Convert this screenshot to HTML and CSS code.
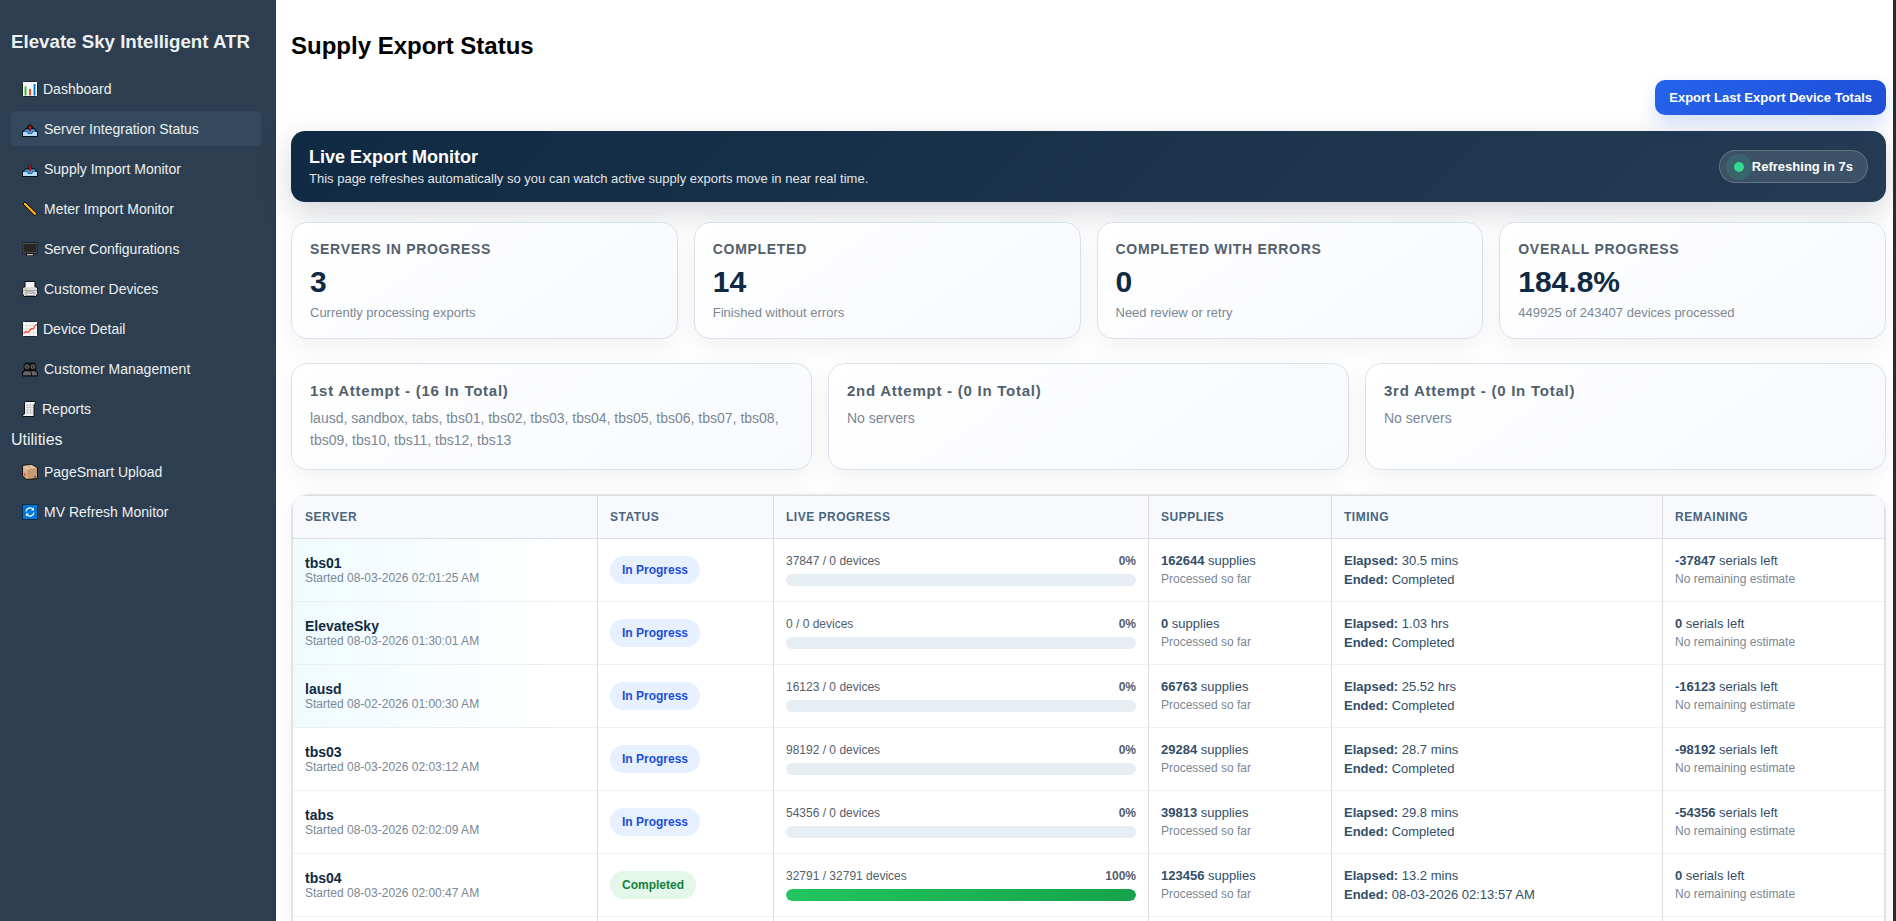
FILE: index.html
```html
<!DOCTYPE html>
<html lang="en">
<head>
<meta charset="utf-8">
<title>Supply Export Status</title>
<link rel="stylesheet" href="styles.css">
</head>
<body>
<div class="app">
<aside class="sidebar">
  <h3 class="brand">Elevate Sky Intelligent ATR</h3>
  <nav class="nav">
    <a class="nav-item"><svg class="ico ico-mid" viewBox="0 0 16 16"><rect x=".5" y=".5" width="15" height="15" rx="1" fill="#f5f5f5" stroke="#1b232c"/><path d="M3.500 5.500v9" stroke="#16c60c" stroke-width="1.800"/><path d="M8 8v6.500" stroke="#f03a17" stroke-width="1.800"/><path d="M12.500 3v11.500" stroke="#0078d7" stroke-width="1.800"/></svg>Dashboard</a>
    <a class="nav-item active"><svg class="ico" viewBox="0 0 16 16"><path d="M.5 10.500L3.500 7.500h9l3 3v5H.5z" fill="#1c3850" stroke="#0c1116"/><path d="M4 8.500h8l2 2h-3.500l-1 2h-3l-1-2H2z" fill="#4a9be0"/><path d="M1 11h4l1.200 2h3.600l1.200-2h4v4H1z" fill="#b3dcf7"/><path d="M8 10V5M5 7l3-3 3 3" stroke="#161616" stroke-width="1.800" fill="none"/><path d="M8 10.500V5" stroke="#e81123" stroke-width="1.300"/><path d="M6.500 6.500L8 4.500l1.500 2z" fill="#e81123"/></svg>Server Integration Status</a>
    <a class="nav-item"><svg class="ico" viewBox="0 0 16 16"><path d="M.5 10.500L3.500 7.500h9l3 3v5H.5z" fill="#1c3850" stroke="#0c1116"/><path d="M4 8.500h8l2 2h-3.500l-1 2h-3l-1-2H2z" fill="#4a9be0"/><path d="M1 11h4l1.200 2h3.600l1.200-2h4v4H1z" fill="#b3dcf7"/><path d="M8 9V3.500" stroke="#161616" stroke-width="2.800"/><path d="M8 9.500V4" stroke="#e81123" stroke-width="1.300"/><path d="M6.300 8.500L8 10.700l1.700-2.200z" fill="#e81123"/></svg>Supply Import Monitor</a>
    <a class="nav-item"><svg class="ico" viewBox="0 0 16 16"><path d="M1 3L3 1 15 12.700 13 14.800z" fill="#ffb900" stroke="#111" stroke-width="1"/></svg>Meter Import Monitor</a>
    <a class="nav-item"><svg class="ico" viewBox="0 0 16 16"><path d="M0 1.500h16v11H12v2.500H4v-2.500H0z" fill="#0c0c0c"/><rect x="1" y="2.500" width="14" height="9" fill="#262626" stroke="#5c5c5c" stroke-width=".8"/><path d="M5 13.700h6" stroke="#e5e5e5" stroke-width="1.200"/></svg>Server Configurations</a>
    <a class="nav-item"><svg class="ico" viewBox="0 0 16 16"><path d="M3 .5h10V6h2l.6 1v5.500L14 15.500H2L.4 12.500V7L1 6h2z" fill="#dcdcdc" stroke="#111"/><path d="M4 1h8v5H4z" fill="#f7f7f7"/><path d="M1 9.500h14" stroke="#a8a8a8"/><path d="M4 11h8v3.500H4z" fill="#f8f8f8" stroke="#777" stroke-width=".7"/><path d="M5 12.500h6" stroke="#999" stroke-width=".7"/><path d="M3 8h2" stroke="#b4c916"/></svg>Customer Devices</a>
    <a class="nav-item"><svg class="ico ico-mid" viewBox="0 0 16 16"><rect x=".5" y=".5" width="15" height="15" rx="1" fill="#f7f7f7" stroke="#1b232c"/><path d="M1 4.500h14M1 8h14M1 11.500h14M4.500 1v14M8 1v14M11.500 1v14" stroke="#d8d8d8" stroke-width=".7"/><path d="M1.500 12.500l2.500-2 2 1 3.500-4 1.500.5L14.500 3" stroke="#f0452a" stroke-width="1.300" fill="none"/></svg>Device Detail</a>
    <a class="nav-item"><svg class="ico" viewBox="0 0 16 16"><path d="M.5 15v-3.500l2-2.500L2 5l1.500-3h4L8 3l1-1h3.500L14 5l-.5 4 2 2.500V15z" fill="#0e0e0e" stroke="#0b0b0b"/><circle cx="5" cy="5.500" r="2.600" fill="#444"/><circle cx="11" cy="5.500" r="2.600" fill="#444"/><circle cx="5" cy="6" r="1.400" stroke="#777" stroke-width=".7" fill="#222"/><circle cx="10.500" cy="6" r="1.400" stroke="#777" stroke-width=".7" fill="#222"/><path d="M1 14.200v-2l2-2h4.500l1.500 2v2zM10 14.200v-2l-1.500-2H13l2 2v2z" fill="#686868"/></svg>Customer Management</a>
    <a class="nav-item"><svg class="ico ico-narrow" viewBox="0 0 14 16"><path d="M2.500 1L4 .5h9l.5 2-1.500 1V15.500H1L.5 13.500l2-.5z" fill="#f2f2f2" stroke="#111"/><path d="M4 4h7M4 6.500h7M4 9h7M4 11.500h7M5.500 3.500v10M8.500 3.500v10" stroke="#b5b5b5" stroke-width=".6"/></svg>Reports</a>
    <div class="nav-heading">Utilities</div>
    <a class="nav-item"><svg class="ico" viewBox="0 0 16 16"><path d="M.5 1.500L9.500.5l6 3.500v10.500l-10.500 1L.5 12z" fill="#c69a6d" stroke="#15100c"/><path d="M1 2l4 3.500V15L1 11.800z" fill="#dbb48e"/><path d="M1 2l8.500-1L15 4 5 5.500z" fill="#e6c6a5"/><path d="M5.500 2l4 2.500" stroke="#c09870"/><path d="M2 9l1.500 3" stroke="#e8384f" stroke-width="1.400"/><path d="M12 13l2-.3" stroke="#4d3520" stroke-width="1.200"/></svg>PageSmart Upload</a>
    <a class="nav-item"><svg class="ico" viewBox="0 0 16 16"><rect x=".5" y=".5" width="15" height="15" fill="#0078d7" stroke="#0b2b4a"/><path d="M4 7.500A4 4 0 0 1 11 5.300M12 8.500A4 4 0 0 1 5 10.700" stroke="#fff" stroke-width="1.200" fill="none"/><path d="M12 3.500V6.500H9zM4 12.500V9.500h3z" fill="#fff"/></svg>MV Refresh Monitor</a>
  </nav>
</aside>
<main class="main">
  <h1 class="page-title">Supply Export Status</h1>
  <div class="actions"><button class="export-btn">Export Last Export Device Totals</button></div>
  <section class="banner">
    <div>
      <div class="banner-title">Live Export Monitor</div>
      <div class="banner-sub">This page refreshes automatically so you can watch active supply exports move in near real time.</div>
    </div>
    <div class="refresh"><span class="dot"></span>Refreshing in 7s</div>
  </section>
  <section class="stats">
    <div class="card"><div class="label">SERVERS IN PROGRESS</div><div class="value">3</div><div class="note">Currently processing exports</div></div>
    <div class="card"><div class="label">COMPLETED</div><div class="value">14</div><div class="note">Finished without errors</div></div>
    <div class="card"><div class="label">COMPLETED WITH ERRORS</div><div class="value">0</div><div class="note">Need review or retry</div></div>
    <div class="card"><div class="label">OVERALL PROGRESS</div><div class="value">184.8%</div><div class="note">449925 of 243407 devices processed</div></div>
  </section>
  <section class="attempts">
    <div class="card"><div class="attempt-title">1st Attempt - (16 In Total)</div><div class="servers">lausd, sandbox, tabs, tbs01, tbs02, tbs03, tbs04, tbs05, tbs06, tbs07, tbs08, tbs09, tbs10, tbs11, tbs12, tbs13</div></div>
    <div class="card"><div class="attempt-title">2nd Attempt - (0 In Total)</div><div class="servers">No servers</div></div>
    <div class="card"><div class="attempt-title">3rd Attempt - (0 In Total)</div><div class="servers">No servers</div></div>
  </section>
  <section class="table-wrap">
    <table class="grid">
      <colgroup><col class="c1"><col class="c2"><col class="c3"><col class="c4"><col class="c5"><col class="c6"></colgroup>
      <thead><tr><th>SERVER</th><th>STATUS</th><th>LIVE PROGRESS</th><th>SUPPLIES</th><th>TIMING</th><th>REMAINING</th></tr></thead>
      <tbody>
        <tr class="live"><td><div class="name">tbs01</div><div class="started">Started 08-03-2026 02:01:25 AM</div></td><td><span class="pill">In Progress</span></td><td><div class="prog"><span>37847 / 0 devices</span><b>0%</b></div><div class="bar"></div></td><td><div class="line"><b>162644</b> supplies</div><div class="sub">Processed so far</div></td><td class="timing"><div class="line"><b>Elapsed:</b> 30.5 mins</div><div class="line"><b>Ended:</b> Completed</div></td><td><div class="line"><b>-37847</b> serials left</div><div class="sub">No remaining estimate</div></td></tr>
        <tr class="live"><td><div class="name">ElevateSky</div><div class="started">Started 08-03-2026 01:30:01 AM</div></td><td><span class="pill">In Progress</span></td><td><div class="prog"><span>0 / 0 devices</span><b>0%</b></div><div class="bar"></div></td><td><div class="line"><b>0</b> supplies</div><div class="sub">Processed so far</div></td><td class="timing"><div class="line"><b>Elapsed:</b> 1.03 hrs</div><div class="line"><b>Ended:</b> Completed</div></td><td><div class="line"><b>0</b> serials left</div><div class="sub">No remaining estimate</div></td></tr>
        <tr class="live"><td><div class="name">lausd</div><div class="started">Started 08-02-2026 01:00:30 AM</div></td><td><span class="pill">In Progress</span></td><td><div class="prog"><span>16123 / 0 devices</span><b>0%</b></div><div class="bar"></div></td><td><div class="line"><b>66763</b> supplies</div><div class="sub">Processed so far</div></td><td class="timing"><div class="line"><b>Elapsed:</b> 25.52 hrs</div><div class="line"><b>Ended:</b> Completed</div></td><td><div class="line"><b>-16123</b> serials left</div><div class="sub">No remaining estimate</div></td></tr>
        <tr><td><div class="name">tbs03</div><div class="started">Started 08-03-2026 02:03:12 AM</div></td><td><span class="pill">In Progress</span></td><td><div class="prog"><span>98192 / 0 devices</span><b>0%</b></div><div class="bar"></div></td><td><div class="line"><b>29284</b> supplies</div><div class="sub">Processed so far</div></td><td class="timing"><div class="line"><b>Elapsed:</b> 28.7 mins</div><div class="line"><b>Ended:</b> Completed</div></td><td><div class="line"><b>-98192</b> serials left</div><div class="sub">No remaining estimate</div></td></tr>
        <tr><td><div class="name">tabs</div><div class="started">Started 08-03-2026 02:02:09 AM</div></td><td><span class="pill">In Progress</span></td><td><div class="prog"><span>54356 / 0 devices</span><b>0%</b></div><div class="bar"></div></td><td><div class="line"><b>39813</b> supplies</div><div class="sub">Processed so far</div></td><td class="timing"><div class="line"><b>Elapsed:</b> 29.8 mins</div><div class="line"><b>Ended:</b> Completed</div></td><td><div class="line"><b>-54356</b> serials left</div><div class="sub">No remaining estimate</div></td></tr>
        <tr><td><div class="name">tbs04</div><div class="started">Started 08-03-2026 02:00:47 AM</div></td><td><span class="pill done">Completed</span></td><td><div class="prog"><span>32791 / 32791 devices</span><b>100%</b></div><div class="bar"><div class="fill" style="width:100%"></div></div></td><td><div class="line"><b>123456</b> supplies</div><div class="sub">Processed so far</div></td><td class="timing"><div class="line"><b>Elapsed:</b> 13.2 mins</div><div class="line"><b>Ended:</b> 08-03-2026 02:13:57 AM</div></td><td><div class="line"><b>0</b> serials left</div><div class="sub">No remaining estimate</div></td></tr>
        <tr><td></td><td></td><td></td><td></td><td></td><td></td></tr>
      </tbody>
    </table>
  </section>
</main>
</div>
</body>
</html>
```
FILE: styles.css
```css
* { box-sizing: border-box; }
body { margin: 0; background: #fff; font-family: Arial, "Liberation Sans", sans-serif; overflow: hidden; }
.app { display: flex; height: 921px; overflow: hidden; border-right: 3px solid #2b2b2b; }

.sidebar { width: 276px; flex: none; padding: 31px 15px 0 11px; background: #2c3e50; color: #ecf0f1; }
.brand { margin: 0 0 19px; font-size: 18.72px; line-height: 21px; white-space: nowrap; }
.nav { display: flex; flex-direction: column; gap: 5px; }
.nav-item { display: flex; align-items: center; height: 35px; padding-left: 11px; border-radius: 5px; font-size: 14px; line-height: 16px; white-space: nowrap; }
.nav-item.active { background: #34495e; }
.nav-heading { height: 18px; font-size: 16px; line-height: 18px; }
.ico { flex: none; width: 16px; height: 16px; margin-top: 1px; margin-right: 6px; }
.ico-mid { margin-right: 5px; }
.ico-narrow { width: 14px; }

.main { flex: 1; min-width: 0; padding: 32px 7px 0 15px; }
.page-title { margin: 0 0 21px; font-size: 24px; line-height: 27px; color: #000; }
.actions { display: flex; justify-content: flex-end; margin-bottom: 16px; }
.export-btn { height: 35px; padding: 0 14px; border: 0; border-radius: 10px; background: linear-gradient(135deg, #2563eb, #1d4ed8); box-shadow: 0 8px 18px rgba(37, 99, 235, .2); color: #fff; font: bold 13px Arial, "Liberation Sans", sans-serif; }

.banner { display: flex; align-items: center; justify-content: space-between; height: 71px; margin-bottom: 20px; padding: 0 18px; border-radius: 14px; background: linear-gradient(135deg, #102a43, #243b53); box-shadow: 0 10px 30px rgba(15, 23, 42, .18); color: #fff; }
.banner-title { margin-bottom: 4px; font-size: 18px; font-weight: bold; line-height: 20px; }
.banner-sub { font-size: 13px; line-height: 15px; opacity: .88; }
.refresh { display: flex; align-items: center; gap: 8px; height: 33px; padding: 0 14px; border: 1px solid rgba(255, 255, 255, .2); border-radius: 999px; background: rgba(255, 255, 255, .12); font-size: 13px; font-weight: bold; }
.dot { width: 10px; height: 10px; border-radius: 50%; background: #34d98e; box-shadow: 0 0 0 8px rgba(52, 217, 142, .14); }

.stats, .attempts { display: grid; gap: 16px; margin-bottom: 24px; }
.stats { grid-template-columns: repeat(4, 1fr); }
.attempts { grid-template-columns: repeat(3, 1fr); }
.card { padding: 18px; border: 1px solid #d9e2ec; border-radius: 16px; background: linear-gradient(145deg, #fff, #f7f9fd); box-shadow: 0 8px 24px rgba(15, 23, 42, .06); }
.label { font-size: 14px; font-weight: bold; letter-spacing: .7px; line-height: 16px; color: #52606d; }
.value { margin: 8px 0 6px; font-size: 30px; font-weight: bold; line-height: 34px; color: #102a43; }
.note { font-size: 13px; line-height: 15px; color: #7b8794; }
.attempt-title { margin-bottom: 8px; font-size: 15px; font-weight: bold; letter-spacing: .75px; line-height: 17px; color: #52606d; }
.servers { font-size: 14px; line-height: 22px; color: #7b8794; }

.table-wrap { overflow: hidden; border: 1px solid #e0e8ef; border-radius: 16px; box-shadow: 0 8px 24px rgba(15, 23, 42, .06); background: #fff; }
.grid { width: 100%; table-layout: fixed; border-collapse: separate; border-spacing: 0; border-right: 1px solid #ddd; }
.c1 { width: 305px; } .c2 { width: 176px; } .c3 { width: 375px; } .c4 { width: 183px; } .c5 { width: 331px; }
.grid th { height: 44px; padding: 0 12px; border: solid #ddd; border-width: 1px 0 1px 1px; border-bottom-color: #d9e2ec; background: #f7f9fc; font-size: 12px; letter-spacing: .5px; text-align: left; color: #486581; }
.grid td { height: 63px; padding: 0 12px; border-left: 1px solid #ddd; border-bottom: 1px solid #edf0f3; vertical-align: middle; }
.grid .timing { padding-top: 2px; }
.live td:first-child { background: linear-gradient(90deg, #f0fbff, #fff 85%); }
.name { font-size: 14px; font-weight: bold; line-height: 16px; color: #102a43; }
.started { font-size: 12px; line-height: 14px; color: #7b8794; }
.pill { display: flex; align-items: center; width: max-content; height: 28px; padding: 0 12px; border-radius: 999px; background: #e6f0ff; font-size: 12px; font-weight: bold; color: #1d4ed8; }
.pill.done { background: #e3f8ea; color: #15803d; }
.prog { display: flex; justify-content: space-between; margin-bottom: 6px; font-size: 12px; line-height: 14px; color: #52606d; }
.bar { height: 12px; overflow: hidden; border-radius: 999px; background: #e6edf3; }
.fill { height: 100%; border-radius: 999px; background: linear-gradient(90deg, #22c55e, #16a34a); }
.line { font-size: 13px; line-height: 18.85px; color: #334e68; }
.sub { font-size: 12px; line-height: 17.4px; color: #7b8794; }
```
